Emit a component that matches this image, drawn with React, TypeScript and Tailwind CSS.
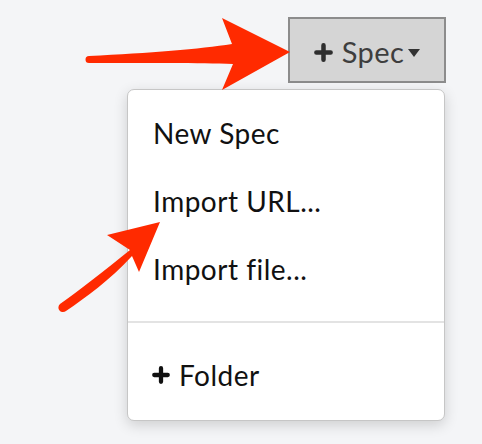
import React from "react";

function Plus({ className = "" }: { className?: string }) {
  return (
    <svg viewBox="0 0 16 16" className={className} aria-hidden="true">
      <path d="M8 2v12M2 8h12" stroke="currentColor" strokeWidth="3.8" strokeLinecap="round" />
    </svg>
  );
}

export default function App() {
  return (
    <div className="relative w-[482px] h-[444px] bg-[#f4f5f7] overflow-hidden font-['Lato',sans-serif]">
      <div className="flex flex-col items-end pt-[17px] pr-[36px]">
        {/* Spec button */}
        <button
          type="button"
          className="h-[66px] w-[158px] bg-[#d5d5d5] border-2 border-[#8c8c8c] flex items-center justify-center pt-[4px] text-[#3e3e3e] text-[29px] tracking-[0.4px]"
        >
          <Plus className="size-[19px] text-[#2e2e2e] mr-[9px]" />
          <span>Spec</span>
          <span className="w-0 h-0 border-l-[6px] border-r-[6px] border-t-[8px] border-l-transparent border-r-transparent border-t-[#333] ml-[4px] mt-[2px]" />
        </button>

        {/* Dropdown */}
        <div className="mt-[6px] mr-[1px] w-[318px] bg-white rounded-[7px] border border-[#c6c6c6] shadow-[0_4px_14px_rgba(0,0,0,0.16)] text-[#111] text-[28px] tracking-[0.5px]">
          <div className="pt-[25px] pb-[34px] px-[25px] flex flex-col gap-[32px] leading-[36px]">
            <div>New Spec</div>
            <div>Import URL...</div>
            <div>Import file...</div>
          </div>
          <div className="h-[2px] bg-[#e3e3e3]" />
          <div className="px-[24px] pt-[34px] pb-[27px] flex items-center gap-[9px] leading-[36px]">
            <Plus className="size-[18px] text-[#111]" />
            <span>Folder</span>
          </div>
        </div>
      </div>

      {/* Arrows */}
      <svg className="absolute inset-0 pointer-events-none" width="482" height="444" viewBox="0 0 482 444">
        <path
          d="M89 56 C150 53 200 49 232 44 L222 18 L290 52 L222 90 L233 64 C200 63 150 63 89 63 A3.5 3.5 0 0 1 89 56 Z"
          fill="#ff2a00"
        />
        <path
          d="M60 304 C80 290 105 270 130 250 L107 235 L160 222 L139 272 L132 256 C110 280 85 298 66 311 A4 4 0 0 1 60 304 Z"
          fill="#ff2a00"
        />
      </svg>
    </div>
  );
}
